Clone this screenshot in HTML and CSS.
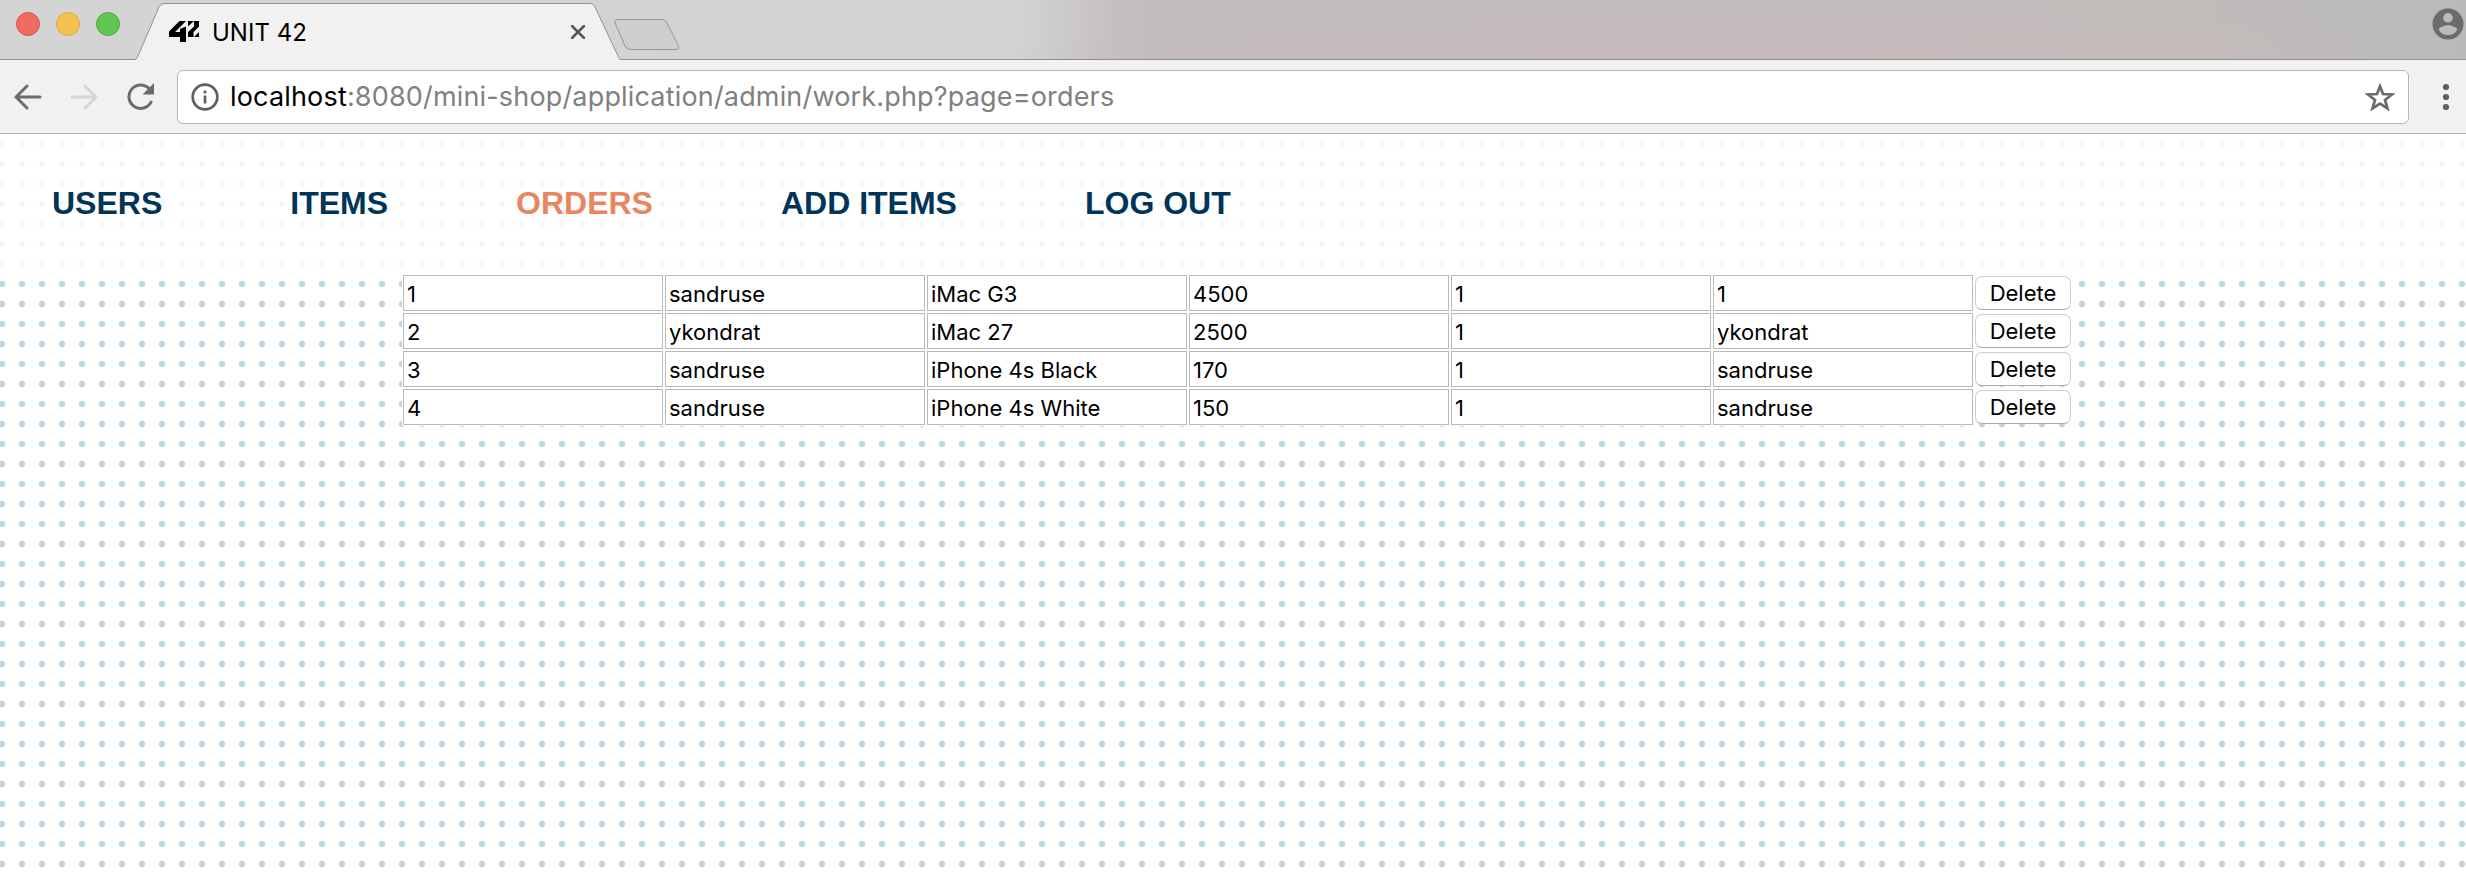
FILE: index.html
```
<!DOCTYPE html>
<html lang="en">
<head>
<meta charset="utf-8">
<title>UNIT 42</title>
<link rel="stylesheet" href="styles.css">
</head>
<body>
<header class="chrome">
  <div class="tabstrip">
    <div class="lights"><span class="light red"></span><span class="light yellow"></span><span class="light green"></span></div>
    <div class="tab">
      <svg class="tab-shape" width="486" height="60" viewBox="0 0 486 60"><path class="tab-fill" d="M0 60 Q2 59 3 56 L24 7 Q26 3.500 29 3.500 H456 Q459 3.500 460 7 L483 56 Q484 59 486 60Z"/><path class="tab-line" d="M0 59.500 Q2 59 3 56 L24 7 Q26 3.500 29 3.500 H456 Q459 3.500 460 7 L483 56 Q484 59.500 486 59.500"/></svg>
      <div class="tab-content">
        <svg class="logo" width="31" height="22" viewBox="0 0 31 22"><path d="M10.500 0H17L6 11H11V8L17 5.500V21H11V16H0V10.500Z"/><path d="M19 0H30V5.500L24.500 11V16H19V11L25 5.500V0L19 5.500Z"/><path d="M30 11V16H25Z"/></svg>
        <span class="tab-title">UNIT 42</span>
        <svg class="close" width="14" height="14" viewBox="0 0 14 14"><path d="M1 1L13 13M13 1L1 13"/></svg>
      </div>
    </div>
    <svg class="newtab" width="68" height="34" viewBox="0 0 68 34"><path d="M5 1.500H49Q52 1.500 54 5L65.500 28Q66.500 31.500 63 31.500H18Q14 31.500 12 28L2 5Q1 1.500 5 1.500Z"/></svg>
    <svg class="person" width="32" height="32" viewBox="0 0 32 32"><path fill-rule="evenodd" d="M16 .5a15.500 15.500 0 1 0 0 31a15.500 15.500 0 0 0 0-31zM16 5a4.800 4.800 0 1 1 0 9.600a4.800 4.800 0 0 1 0-9.600zM16 27c-4 0-7.500-2-9.300-5c0-3 6.200-4.700 9.300-4.700s9.300 1.700 9.300 4.700c-1.800 3-5.300 5-9.300 5z"/></svg>
  </div>
  <div class="toolbar">
    <svg class="nav-icon back" width="28" height="26" viewBox="0 0 28 26"><path d="M26 13H2M13 2L2 13L13 24"/></svg>
    <svg class="nav-icon forward" width="28" height="26" viewBox="0 0 28 26"><path d="M1 13H25M14 2L25 13L14 24"/></svg>
    <svg class="nav-icon reload" width="30" height="28" viewBox="0 0 30 28"><path d="M25.500 18A11.700 11.700 0 1 1 23.500 6"/><path class="solid" d="M28 0V11.500H16.500Z"/></svg>
    <div class="address">
      <svg class="info" width="28" height="28" viewBox="0 0 28 28"><circle cx="14" cy="14" r="12.300"/><path d="M14 12.500V20.500M14 7.500V10.500"/></svg>
      <span class="url"><b class="host">localhost</b>:8080/mini-shop/application/admin/work.php?page=orders</span>
      <svg class="star" width="30" height="28" viewBox="0 0 30 28"><path d="M15 3.200L18 11L27 11.500L20 17L22.500 25.500L15 20.700L7.500 25.500L10 17L3 11.500L12 11Z"/></svg>
    </div>
    <svg class="dots" width="8" height="28" viewBox="0 0 8 28"><circle cx="4" cy="4" r="3.100"/><circle cx="4" cy="14" r="3.100"/><circle cx="4" cy="24" r="3.100"/></svg>
  </div>
</header>
<main class="page">
  <nav class="menu"><a>USERS</a><a>ITEMS</a><a class="active">ORDERS</a><a>ADD ITEMS</a><a>LOG OUT</a></nav>
  <div class="orders">
    <div class="row"><span class="field">1</span><span class="field">sandruse</span><span class="field">iMac G3</span><span class="field">4500</span><span class="field">1</span><span class="field">1</span><button class="delete">Delete</button></div>
    <div class="row"><span class="field">2</span><span class="field">ykondrat</span><span class="field">iMac 27</span><span class="field">2500</span><span class="field">1</span><span class="field">ykondrat</span><button class="delete">Delete</button></div>
    <div class="row"><span class="field">3</span><span class="field">sandruse</span><span class="field">iPhone 4s Black</span><span class="field">170</span><span class="field">1</span><span class="field">sandruse</span><button class="delete">Delete</button></div>
    <div class="row"><span class="field">4</span><span class="field">sandruse</span><span class="field">iPhone 4s White</span><span class="field">150</span><span class="field">1</span><span class="field">sandruse</span><button class="delete">Delete</button></div>
  </div>
</main>
</body>
</html>
```
FILE: styles.css
```
* { box-sizing: border-box; }
body { margin: 0; height: 876px; overflow: hidden; display: flex; flex-direction: column; font-family: Inter, "Liberation Sans", sans-serif; color: #000; background: #fff; }
.chrome { flex: none; height: 134px; background: #f1f1f1; border-bottom: 1px solid #b3b3b3; }
.tabstrip { height: 60px; display: flex; align-items: flex-start; border-bottom: 1px solid #8f8d8d; background: radial-gradient(ellipse 750px 55px at 1750px 60px, rgba(203,185,187,.65), rgba(203,185,187,0)), linear-gradient(90deg, #d5d4d4 0, #d3d2d2 1020px, #c4bfbf 1120px, #c1bbbb 1180px, #c1bbbc 1700px, #c1bbba 2200px, #bcbbba 2350px, #bababa 2466px); }
.lights { display: flex; gap: 16px; padding: 12px 0 0 16px; width: 135px; flex: none; }
.light { width: 24px; height: 24px; border-radius: 50%; border: 1px solid; }
.red { background: #ed6b60; border-color: #d9554b; }
.yellow { background: #f5c04f; border-color: #dba33b; }
.green { background: #62c655; border-color: #4aab3c; }
.tab { width: 486px; height: 60px; flex: none; display: grid; }
.tab-shape, .tab-content { grid-area: 1 / 1; }
.tab-fill { fill: #f1f1f1; }
.tab-line { fill: none; stroke: #929090; }
.tab-content { display: flex; align-items: center; padding: 4px 36px 0 34px; }
.logo { margin-right: 12px; }
.tab-title { font-size: 24px; flex: 1; }
.close { stroke: #555; stroke-width: 2.500px; fill: none; stroke-linecap: round; }
.newtab { margin: 18px 0 0 -8px; fill: #cfcece; stroke: #989696; }
.person { margin: 8px 2px 0 auto; fill: #6b6b6b; }
.toolbar { height: 73px; display: flex; align-items: center; padding: 0 16px 0 14px; }
.nav-icon { fill: none; stroke: #6b6b6b; stroke-width: 3px; stroke-linecap: round; flex: none; }
.forward { stroke: #d6d6d6; margin-left: 29px; }
.reload { margin-left: 27px; stroke-linecap: butt; }
.solid { fill: #6b6b6b; stroke: none; }
.address { flex: 1; height: 54px; margin: 0 33px 0 21px; border: 1px solid #b6b6b6; border-radius: 6px; background: #fff; display: flex; align-items: center; padding: 0 13px; }
.info { fill: none; stroke: #606060; stroke-width: 2.700px; flex: none; }
.url { margin-left: 11px; font-size: 27px; letter-spacing: .17px; color: #808080; flex: 1; white-space: nowrap; }
.host { color: #000; font-weight: 400; }
.star { fill: none; stroke: #6b6b6b; stroke-width: 2.700px; }
.dots { fill: #606060; }
.page { flex: 1; background: radial-gradient(circle at 10px 10px, #bfd7e3 2.700px, rgba(191,215,227,0) 3.700px) -8px 0 / 20px 20px; }
.menu { height: 140px; background: rgba(255,255,255,.8); display: flex; align-items: center; gap: 128px; padding: 0 0 2px 52px; font: bold 32px "Liberation Sans", Arial, sans-serif; color: #003459; }
.active { color: #e98660; }
.orders { padding: 1px 0 0 403px; display: flex; flex-direction: column; gap: 2px; }
.row { display: flex; gap: 2px; height: 36px; align-items: center; }
.field { width: 260px; height: 36px; border: 1px solid #b9b9b9; background: #fff; box-shadow: 0 0 0 1px #fff; font-size: 22px; line-height: 36px; padding-left: 3px; }
.delete { width: 96px; height: 34px; margin: 0; padding: 0; border: 1px solid #cecece; border-bottom-color: #aaa; border-radius: 7px; background: #fff; font: 22px Inter, sans-serif; color: #000; }
```
